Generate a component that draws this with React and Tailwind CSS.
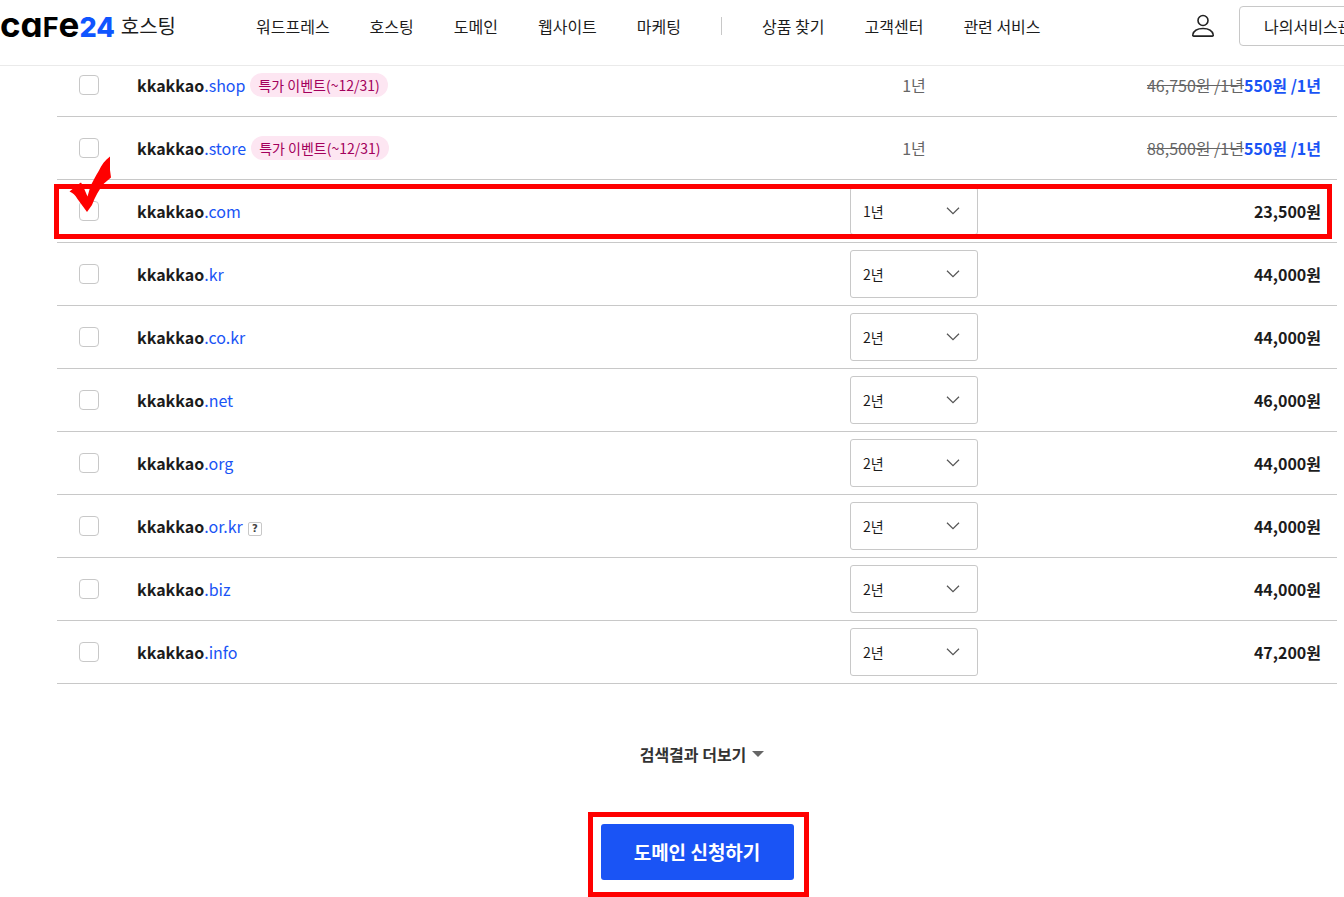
import React from "react";

const mainMenu = ["워드프레스", "호스팅", "도메인", "웹사이트", "마케팅"];
const subMenu = ["상품 찾기", "고객센터", "관련 서비스"];

const domains = [
  { tld: ".shop", event: true, oldPrice: "46,750원 /1년", price: "550원 /1년" },
  { tld: ".store", event: true, oldPrice: "88,500원 /1년", price: "550원 /1년" },
  { tld: ".com", years: 1, price: "23,500원", marked: true },
  { tld: ".kr", years: 2, price: "44,000원" },
  { tld: ".co.kr", years: 2, price: "44,000원" },
  { tld: ".net", years: 2, price: "46,000원" },
  { tld: ".org", years: 2, price: "44,000원" },
  { tld: ".or.kr", years: 2, price: "44,000원", help: true },
  { tld: ".biz", years: 2, price: "44,000원" },
  { tld: ".info", years: 2, price: "47,200원" },
];

function Logo() {
  return (
    <a href="#" className="flex shrink-0 items-center gap-1.5">
      <span className="flex items-baseline font-['Inter',sans-serif] text-[35px] leading-10 font-bold text-black [font-feature-settings:'cv11']">
        ca
        <span className="text-[27px] uppercase">f</span>e
        <span className="text-[27px] font-extrabold text-[#0f55ff]">24</span>
      </span>
      <span className="text-xl">호스팅</span>
    </a>
  );
}

function Header() {
  return (
    <header className="sticky top-0 z-20 flex h-[66px] items-start overflow-hidden border-b border-[#eaeaea] bg-white whitespace-nowrap">
      <div className="flex shrink-0 items-center pt-1">
        <div className="w-64 shrink-0">
          <Logo />
        </div>
        <nav className="flex items-center gap-10">
          {mainMenu.map((item) => (
            <a key={item} href="#">
              {item}
            </a>
          ))}
          <span className="h-[18px] w-px bg-[#c8c8c8]" />
          {subMenu.map((item) => (
            <a key={item} href="#">
              {item}
            </a>
          ))}
        </nav>
      </div>

      <div className="ml-auto flex w-[153px] shrink-0 items-center gap-6 pt-1.5">
        <button type="button" aria-label="내 정보" className="shrink-0">
          <svg width="24" height="24" viewBox="0 0 24 24" fill="none" stroke="#222" strokeWidth="1.6">
            <circle cx="12" cy="6.5" r="5" />
            <path d="M1.8 20.7C2.6 16.8 6.6 14.5 12 14.5s9.4 2.3 10.2 6.2c.2.8-.3 1.4-1 1.4H2.8c-.7 0-1.2-.6-1-1.4Z" />
          </svg>
        </button>
        <button
          type="button"
          className="h-10 shrink-0 rounded-sm border border-[#c8c8c8] px-6"
        >
          나의서비스관리
        </button>
      </div>
    </header>
  );
}

function YearSelect({ id, years }) {
  return (
    <div className="relative mx-auto w-32">
      <select
        id={id}
        aria-label="등록 기간"
        defaultValue={years}
        className="block h-12 w-full appearance-none rounded-[3px] border border-[#c8c8c8] bg-white px-3 text-sm text-[#1c1c1c]"
      >
        <option value={1}>1년</option>
        <option value={2}>2년</option>
      </select>
      <svg
        className="pointer-events-none absolute top-5 right-[18px]"
        width="14"
        height="8"
        viewBox="0 0 14 8"
        fill="none"
        stroke="#555"
        strokeWidth="1.2"
      >
        <path d="M1 .8 7 6.6 13 .8" />
      </svg>
    </div>
  );
}

// red box and hand-drawn tick over the row to choose
function RowMark() {
  return (
    <div className="pointer-events-none absolute top-1 right-[5px] bottom-1 -left-[3px] z-10 border-5 border-[#ff0000]">
      <svg
        className="absolute -top-[33px] left-2.5"
        width="44"
        height="58"
        viewBox="0 0 44 58"
        fill="#ff0000"
      >
        <path d="M41 .5C36 4 32.500 9 30 14.500C27 19.500 24 25 21.500 30L18.500 40.500L14 30L12 26.500L9 28.500L.5 35.500C4 37 6 39 8.500 43L18 56L23 49C26 41 30 33.500 35 27.500L42 21.500L41 14Z" />
      </svg>
    </div>
  );
}

function DomainRow({ item }) {
  const id = "domain" + item.tld.replaceAll(".", "-");

  return (
    <tr className="relative h-[63px] *:border-b *:border-[#c8c8c8]">
      <td className="w-16">
        <input
          id={id}
          type="checkbox"
          className="mx-auto block size-5 appearance-none rounded-sm border border-[#c8c8c8] bg-white checked:bg-[#1a54f5]"
        />
        {item.marked && <RowMark />}
      </td>
      <td className="pl-4">
        <div className="flex items-center gap-[5px]">
          <label htmlFor={id}>
            <strong className="font-bold">kkakkao</strong>
            <span className="text-[#1a54f5]">{item.tld}</span>
          </label>
          {item.event && (
            <span className="rounded-full bg-[#fde6f2] px-2 text-sm leading-6 text-[#a3005c]">
              특가 이벤트(~12/31)
            </span>
          )}
          {item.help && (
            <button
              type="button"
              className="mt-1.5 size-3.5 rounded-xs border border-[#c8c8c8] font-['DejaVu_Sans',sans-serif] text-[10px] leading-3 font-bold text-[#444]"
            >
              ?
            </button>
          )}
        </div>
      </td>
      <td className="w-40 text-center text-[#666]">
        {item.years ? <YearSelect id={id + "-years"} years={item.years} /> : "1년"}
      </td>
      <td className="w-[343px] pr-4 text-right">
        {item.oldPrice && <del className="text-[#666]">{item.oldPrice}</del>}
        <strong className={item.oldPrice ? "font-bold text-[#1a54f5]" : "font-bold"}>
          {item.price}
        </strong>
      </td>
    </tr>
  );
}

function App() {
  return (
    <div className="bg-white font-['Noto_Sans_CJK_KR',sans-serif] text-base text-[#1c1c1c]">
      <Header />

      <main className="-mt-3 pr-[7px] pl-[57px]">
        <table className="w-full border-separate border-spacing-0">
          <tbody>
            {domains.map((item) => (
              <DomainRow key={item.tld} item={item} />
            ))}
          </tbody>
        </table>

        <div className="flex flex-col items-center pt-[58px]">
          <button type="button" className="ml-2.5 flex items-center gap-1.5 font-bold text-[#333]">
            검색결과 더보기
            <svg width="12" height="6" viewBox="0 0 12 6" fill="#666">
              <path d="M0 0h12L6 6Z" />
            </svg>
          </button>

          <div className="relative mt-[58px] mb-[17px]">
            <button
              type="button"
              className="h-14 w-[193px] rounded-[3px] bg-[#1a54f5] text-[19px] font-bold text-white"
            >
              도메인 신청하기
            </button>
            <div className="pointer-events-none absolute -top-3 -right-[15px] -bottom-[17px] -left-[13px] border-5 border-[#ff0000]" />
          </div>
        </div>
      </main>
    </div>
  );
}

export default App;
